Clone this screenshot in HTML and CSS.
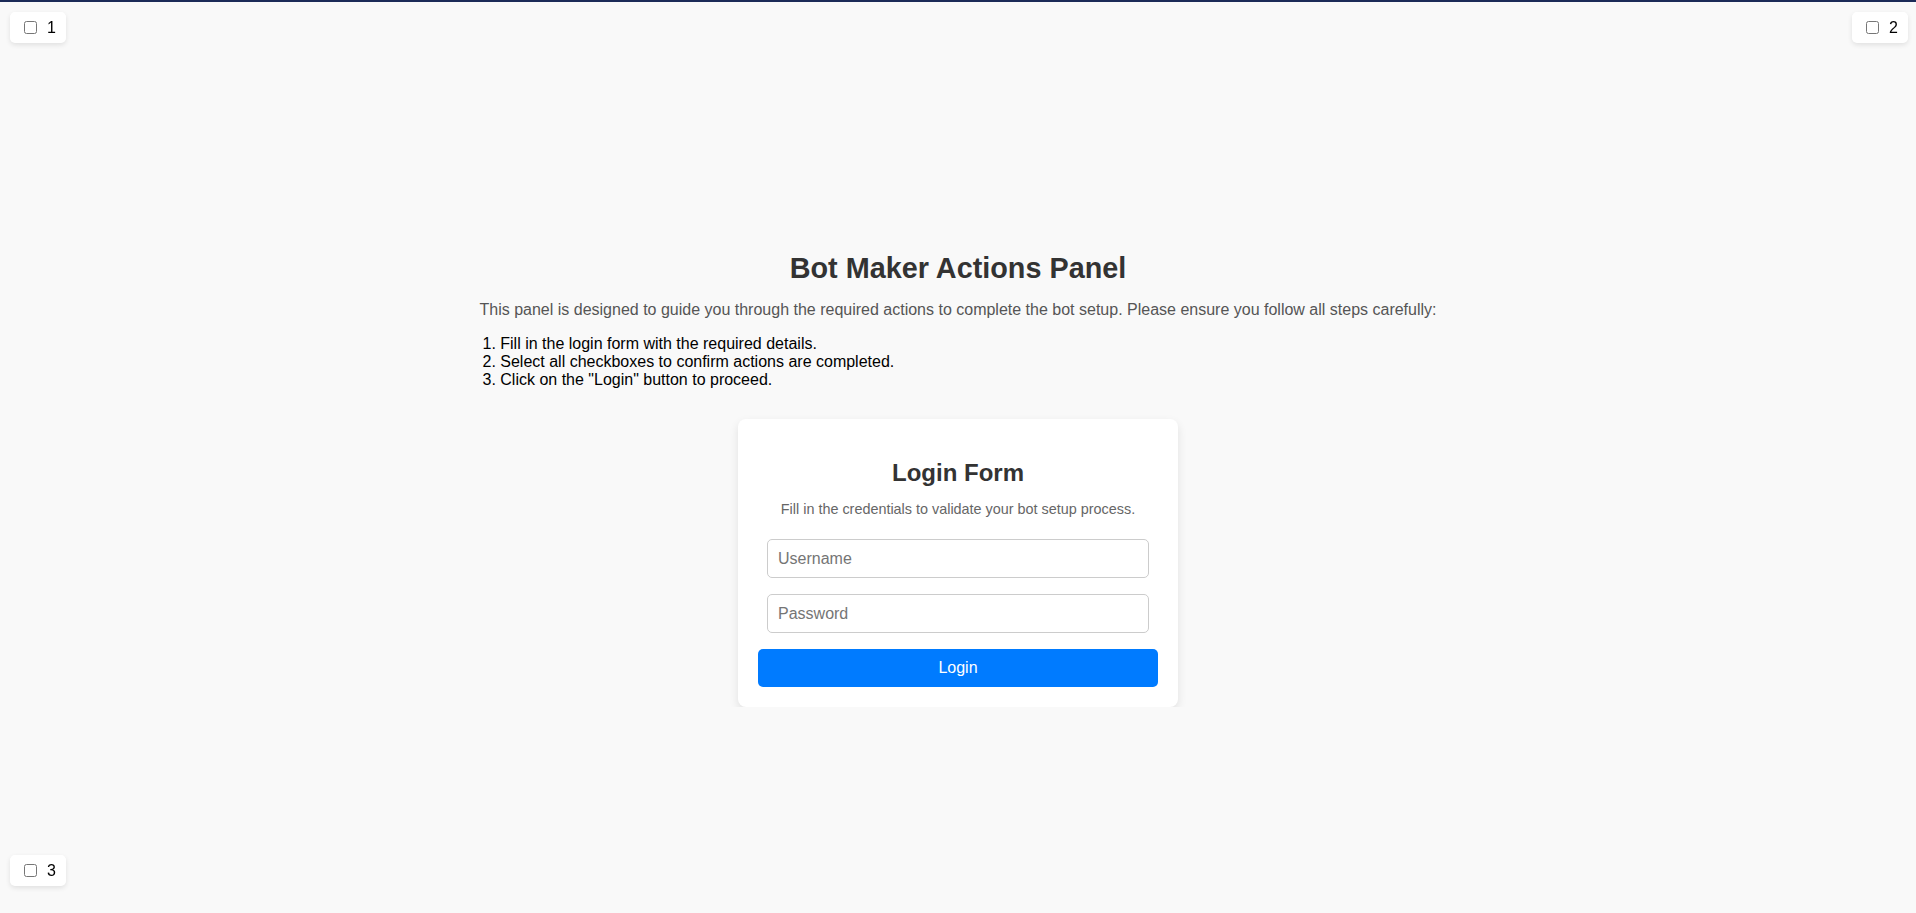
FILE: index.html
```html
<!DOCTYPE html>
<html lang="en">
<head>
    <meta charset="UTF-8">
    <meta name="viewport" content="width=device-width, initial-scale=1.0">
    <title>Bot Maker Actions Panel</title>
    <link rel="stylesheet" href="styles.css">
</head>
<body>
    <div class="top-bar"></div>

    <label class="corner-check check-1"><input type="checkbox"> 1</label>
    <label class="corner-check check-2"><input type="checkbox"> 2</label>
    <label class="corner-check check-3"><input type="checkbox"> 3</label>

    <div class="panel">
        <h1>Bot Maker Actions Panel</h1>
        <div class="intro">
            <p>This panel is designed to guide you through the required actions to complete the bot setup. Please ensure you follow all steps carefully:</p>
            <ol>
                <li>Fill in the login form with the required details.</li>
                <li>Select all checkboxes to confirm actions are completed.</li>
                <li>Click on the "Login" button to proceed.</li>
            </ol>
        </div>

        <form class="login-card" onsubmit="return false;">
            <h2>Login Form</h2>
            <p>Fill in the credentials to validate your bot setup process.</p>
            <input type="text" placeholder="Username">
            <input type="password" placeholder="Password">
            <button type="submit">Login</button>
        </form>
    </div>
</body>
</html>
```

FILE: styles.css
```css
body {
    font-family: "Liberation Sans", Arial, sans-serif;
    margin: 0;
    padding: 0;
    background-color: #f9f9f9;
    color: #000;
}
.top-bar {
    height: 2px;
    background-color: #1c2b58;
}
.corner-check {
    position: fixed;
    display: flex;
    align-items: center;
    gap: 6px;
    background: #fff;
    padding: 6px 10px;
    border-radius: 5px;
    box-shadow: 0 2px 5px rgba(0, 0, 0, 0.1);
    font-size: 16px;
    line-height: 18px;
}
.corner-check input {
    margin: 3px 4px 3px 4px;
}
.check-1 {
    top: 12px;
    left: 10px;
}
.check-2 {
    top: 12px;
    right: 8px;
}
.check-3 {
    bottom: 27px;
    left: 10px;
}
.panel {
    display: flex;
    flex-direction: column;
    align-items: center;
    padding-top: 250px;
}
.panel h1 {
    margin: 0 0 16px;
    font-size: 1.8em;
    color: #333;
}
.intro {
    width: fit-content;
}
.intro p {
    margin: 0 0 16px;
    font-size: 16px;
    color: #555;
}
.intro ol {
    margin: 0 0 30px;
    padding: 0 0 0 3px;
    list-style-position: inside;
    font-size: 16px;
}
.login-card {
    width: 400px;
    padding: 20px;
    background: #fff;
    border-radius: 8px;
    box-shadow: 0 4px 10px rgba(0, 0, 0, 0.1);
    text-align: center;
}
.login-card h2 {
    margin: 20px 0 14px;
    font-size: 1.5em;
    color: #333;
}
.login-card p {
    margin: 0 0 22px;
    font-size: 0.9em;
    color: #666;
}
.login-card input {
    display: block;
    width: 90%;
    height: 17px;
    margin: 0 auto 16px;
    padding: 10px;
    font-family: inherit;
    font-size: 16px;
    border: 1px solid #ccc;
    border-radius: 5px;
}
.login-card button {
    width: 100%;
    padding: 10px;
    font-family: inherit;
    font-size: 16px;
    background-color: #007bff;
    color: #fff;
    border: none;
    border-radius: 5px;
    cursor: pointer;
}
.login-card button:hover {
    background-color: #0069d9;
}
```
